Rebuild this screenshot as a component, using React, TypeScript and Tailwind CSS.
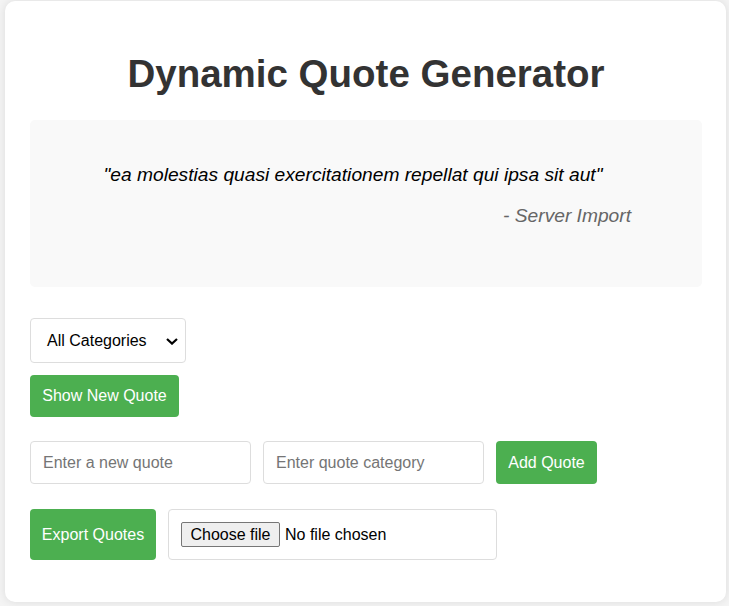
import React from "react";

export default function App() {
  return (
    <div
      className="min-h-screen bg-[#f4f4f4] pt-px pl-[5px] pb-[4px]"
      style={{ fontFamily: '"Liberation Sans", Arial, sans-serif' }}
    >
      <div className="w-[721px] h-[601px] bg-white rounded-[10px] shadow-[0_0_10px_rgba(0,0,0,0.1)] pl-[25px] pr-[24px] pt-[51px]">
        <h1 className="text-center text-[38.5px] leading-[44px] font-bold text-[#333]">
          Dynamic Quote Generator
        </h1>
        <div className="mt-[24px] h-[167px] bg-[#f9f9f9] rounded-[5px] pt-[44px] pl-[45px] pr-[71px]">
          <p className="text-center italic text-[19.2px] leading-[22px] text-black">
            "ea molestias quasi exercitationem repellat qui ipsa sit aut"
          </p>
          <p className="mt-[19px] text-right italic text-[19.2px] leading-[22px] text-[#666]">
            - Server Import
          </p>
        </div>
        <div className="mt-[31px] relative w-[156px] h-[45px] border border-[#ddd] rounded-[4px] flex items-center pl-[16px] text-[16px] text-black">
          All Categories
          <svg
            className="absolute left-[135px] top-[19px]"
            width="12"
            height="7"
            viewBox="0 0 12 7"
            fill="none"
          >
            <path d="M1 1 L6 5.6 L11 1" stroke="#000" strokeWidth="2.2" />
          </svg>
        </div>
        <button className="mt-[12px] block w-[149px] h-[42px] bg-[#4caf50] text-white text-[16px] rounded-[4px]">
          Show New Quote
        </button>
        <div className="mt-[24px] flex gap-[12px] h-[43px]">
          <input
            className="w-[221px] border border-[#ddd] rounded-[4px] px-[12px] text-[16px] placeholder:text-[#757575] outline-none"
            placeholder="Enter a new quote"
          />
          <input
            className="w-[221px] border border-[#ddd] rounded-[4px] px-[12px] text-[16px] placeholder:text-[#757575] outline-none"
            placeholder="Enter quote category"
          />
          <button className="w-[101px] bg-[#4caf50] text-white text-[16px] rounded-[4px]">
            Add Quote
          </button>
        </div>
        <div className="mt-[25px] flex gap-[12px] h-[51px]">
          <button className="w-[126px] bg-[#4caf50] text-white text-[16px] rounded-[4px]">
            Export Quotes
          </button>
          <div className="w-[329px] border border-[#ddd] rounded-[4px] pl-[12px] flex items-center text-[16px] text-black">
            <span className="w-[99px] h-[25px] flex items-center justify-center bg-[#efefef] border border-[#767676] rounded-[2px]">
              Choose file
            </span>
            <span className="ml-[5px]">No file chosen</span>
          </div>
        </div>
      </div>
    </div>
  );
}
